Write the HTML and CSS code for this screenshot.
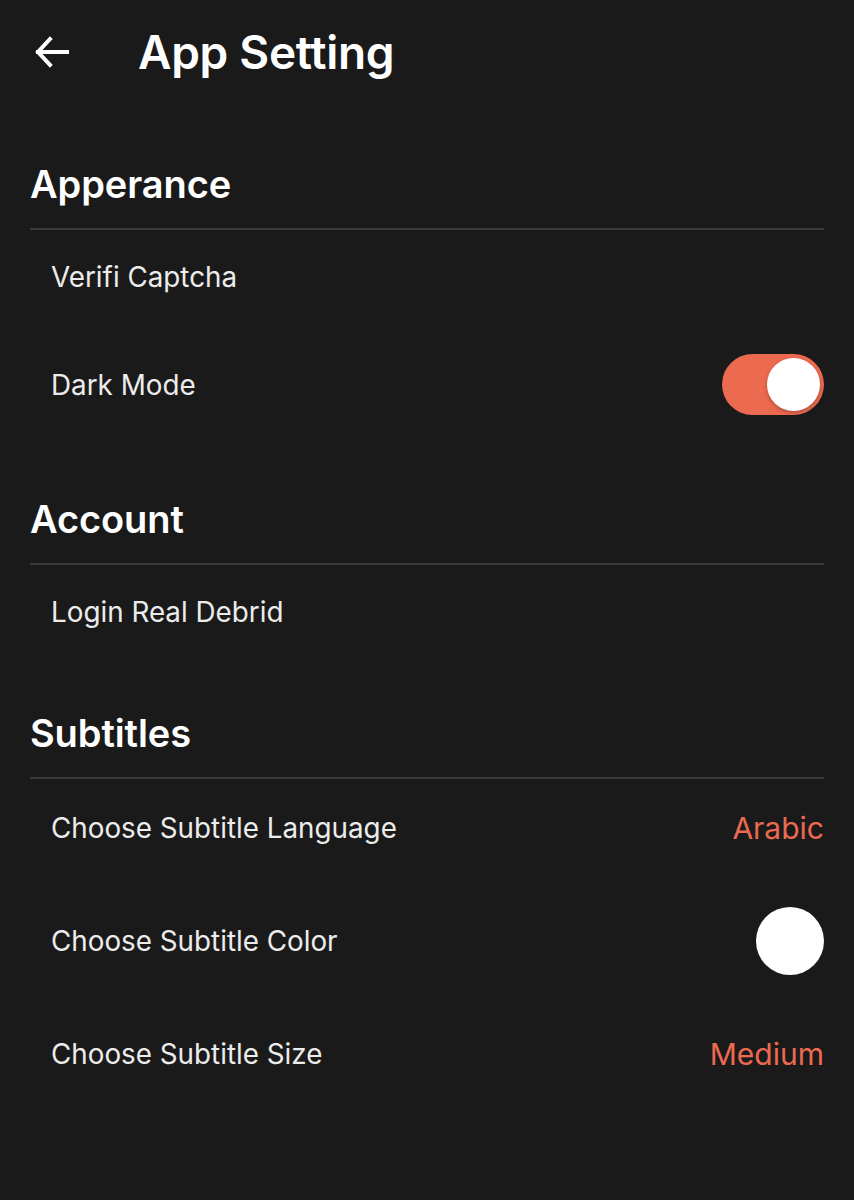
FILE: index.html
```html
<!DOCTYPE html>
<html lang="en">
<head>
<meta charset="utf-8">
<title>App Setting</title>
<link rel="stylesheet" href="styles.css">
</head>
<body>
<div class="screen">
  <header class="topbar">
    <button class="back" aria-label="Back">
      <svg width="36" height="34" viewBox="0 0 36 34" fill="none" stroke="#ffffff" stroke-width="4" stroke-linecap="square" stroke-linejoin="miter">
        <path d="M3 17 H32"/>
        <path d="M15 4 L3 17 L15 30"/>
      </svg>
    </button>
    <h1 class="title">App Setting</h1>
  </header>

  <section class="section first">
    <h2 class="section-title">Apperance</h2>
    <div class="divider"></div>
    <div class="row"><span class="label">Verifi Captcha</span></div>
    <div class="row">
      <span class="label">Dark Mode</span>
      <span class="toggle on"><span class="knob"></span></span>
    </div>
  </section>

  <section class="section">
    <h2 class="section-title">Account</h2>
    <div class="divider"></div>
    <div class="row"><span class="label">Login Real Debrid</span></div>
  </section>

  <section class="section">
    <h2 class="section-title">Subtitles</h2>
    <div class="divider"></div>
    <div class="row">
      <span class="label">Choose Subtitle Language</span>
      <span class="value">Arabic</span>
    </div>
    <div class="row">
      <span class="label">Choose Subtitle Color</span>
      <span class="swatch"></span>
    </div>
    <div class="row">
      <span class="label">Choose Subtitle Size</span>
      <span class="value">Medium</span>
    </div>
  </section>
</div>
</body>
</html>
```

FILE: styles.css
```css
* { box-sizing: border-box; }
html, body {
  margin: 0;
  padding: 0;
  background: #1a1a1a;
}
body {
  font-family: Inter, "Noto Sans", "Liberation Sans", sans-serif;
  color: #ffffff;
  min-height: 1200px;
}
.screen {
  width: 854px;
  padding: 0 30px;
}
.topbar {
  height: 104px;
  display: flex;
  align-items: center;
}
.back {
  background: none;
  border: 0;
  padding: 0;
  margin-left: 5px;
  width: 36px;
  height: 34px;
  display: flex;
  align-items: center;
  justify-content: center;
}
.title {
  margin: 0 0 0 67px;
  font-size: 46px;
  font-weight: 600;
  line-height: 1;
  letter-spacing: -0.3px;
}
.section { margin-top: 30px; }
.section.first { margin-top: 36px; }
.section-title {
  margin: 0;
  height: 88px;
  display: flex;
  align-items: center;
  font-size: 38px;
  font-weight: 600;
  letter-spacing: -0.1px;
}
.divider {
  height: 2px;
  background: #3a3a3a;
}
.row {
  display: flex;
  align-items: center;
  justify-content: space-between;
  padding: 30px 0 30px 21px;
}
.label {
  font-size: 27.8px;
  line-height: 34px;
  color: #ececec;
  font-weight: 400;
}
.value {
  font-size: 30px;
  line-height: 38px;
  color: #ec6a50;
}
.toggle {
  width: 102px;
  height: 61px;
  border-radius: 31px;
  background: #ec6a50;
  display: flex;
  align-items: center;
  justify-content: flex-end;
  padding-right: 4px;
}
.knob {
  width: 53px;
  height: 53px;
  border-radius: 50%;
  background: #ffffff;
  box-shadow: 0 2px 4px rgba(0,0,0,0.25);
}
.swatch {
  width: 68px;
  height: 68px;
  border-radius: 50%;
  background: #ffffff;
}
```
